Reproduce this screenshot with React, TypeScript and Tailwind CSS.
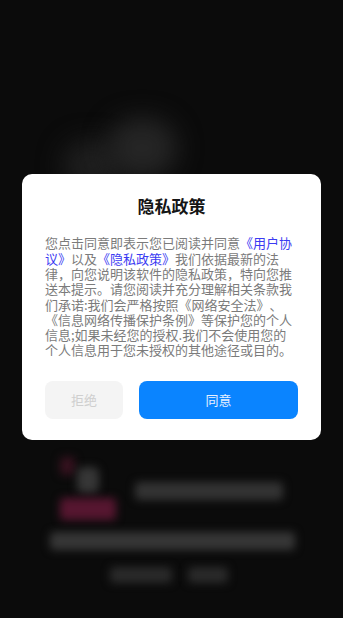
import React from "react";

export default function App() {
  return (
    <div
      className="relative w-[343px] h-[618px] overflow-hidden bg-[#0b0b0b]"
      style={{ fontFamily: '"Noto Sans CJK SC", "Noto Sans", sans-serif' }}
    >
      {/* blurred page behind the modal */}
      <div className="flex flex-col">
        <div className="h-[118px]" />
        <div className="ml-[62px] flex items-start">
          <div className="mt-[22px] w-[60px] h-[50px] rounded-full bg-[#1e1e1e] blur-[12px]" />
          <div className="-ml-[15px] w-[70px] h-[60px] rounded-full bg-[#252525] blur-[12px]" />
        </div>
        <div className="h-[267px]" />
        <div className="ml-[58px] flex items-start">
          <div className="flex flex-col w-[60px]">
            <div className="ml-[2px] w-[15px] h-[18px] rounded-[4px] bg-[#36121f] blur-[4px]" />
            <div className="ml-[19px] -mt-[8px] w-[22px] h-[26px] rounded-[6px] bg-[#363636] blur-[4px]" />
            <div className="mt-[5px] ml-[2px] w-[56px] h-[22px] rounded-[4px] bg-[#561630] blur-[4px]" />
          </div>
          <div className="ml-[17px] mt-[25px] w-[148px] h-[18px] rounded-[4px] bg-[#333333] blur-[4px]" />
        </div>
        <div className="ml-[50px] mt-[12px] w-[245px] h-[18px] rounded-[4px] bg-[#363636] blur-[4px]" />
        <div className="ml-[110px] mt-[17px] flex gap-[16px]">
          <div className="w-[62px] h-[16px] rounded-[4px] bg-[#2a2a2a] blur-[4px]" />
          <div className="w-[40px] h-[16px] rounded-[4px] bg-[#2a2a2a] blur-[4px]" />
        </div>
      </div>

      {/* modal */}
      <div className="absolute inset-0 flex items-center justify-center pb-[4px]">
        <div className="w-[299px] bg-white rounded-[10px] pt-[20px] pb-[21px] px-[23px] flex flex-col">
          <div className="text-center text-[17px] leading-[24px] font-bold text-[#151515]">
            隐私政策
          </div>
          <p className="mt-[17px] text-[13px] leading-[15.3px] text-[#7b7b7b] break-all [text-spacing-trim:space-all]">
            您点击同意即表示您已阅读并同意
            <span className="text-[#3b3bf2]">《用户协议》</span>
            以及
            <span className="text-[#3b3bf2]">《隐私政策》</span>
            我们依据最新的法律，向您说明该软件的隐私政策，特向您推送本提示。请您阅读并充分理解相关条款我们承诺:我们会严格按照《网络安全法》、《信息网络传播保护条例》等保护您的个人信息;如果未经您的授权.我们不会使用您的个人信息用于您未授权的其他途径或目的。
          </p>
          <div className="mt-[23px] flex gap-[16px]">
            <button className="w-[78px] h-[38px] rounded-[8px] bg-[#f4f4f4] text-[13px] text-[#cfcfcf]">
              拒绝
            </button>
            <button className="flex-1 h-[38px] rounded-[8px] bg-[#0a84ff] text-[13px] text-[#e6f0ff]">
              同意
            </button>
          </div>
        </div>
      </div>
    </div>
  );
}
